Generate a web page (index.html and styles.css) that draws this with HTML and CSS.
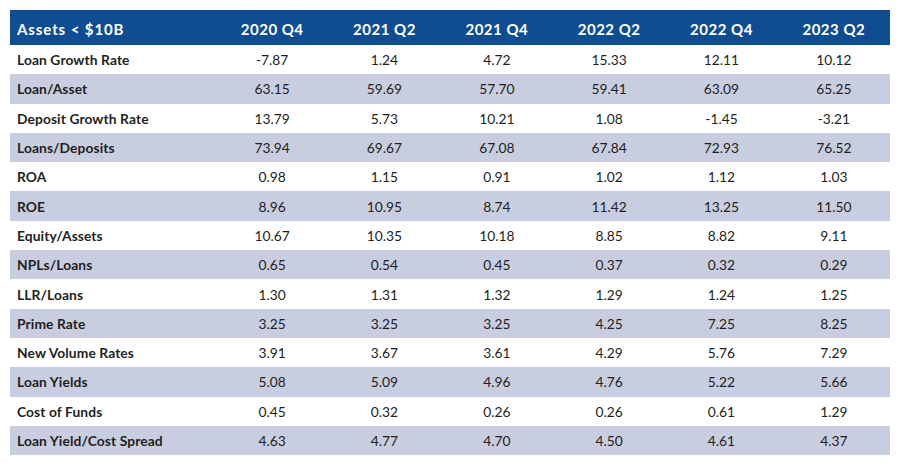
FILE: index.html
```html
<!DOCTYPE html>
<html>
<head>
<meta charset="utf-8">
<link rel="stylesheet" href="styles.css">
</head>
<body>
<table class="data">
<colgroup><col class="c-label"><col><col><col><col><col><col></colgroup>
<thead>
<tr><th class="label">Assets &lt; $10B</th><th>2020 Q4</th><th>2021 Q2</th><th>2021 Q4</th><th>2022 Q2</th><th>2022 Q4</th><th>2023 Q2</th></tr>
</thead>
<tbody>
<tr><td class="label">Loan Growth Rate</td><td>-7.87</td><td>1.24</td><td>4.72</td><td>15.33</td><td>12.11</td><td>10.12</td></tr>
<tr><td class="label">Loan/Asset</td><td>63.15</td><td>59.69</td><td>57.70</td><td>59.41</td><td>63.09</td><td>65.25</td></tr>
<tr><td class="label">Deposit Growth Rate</td><td>13.79</td><td>5.73</td><td>10.21</td><td>1.08</td><td>-1.45</td><td>-3.21</td></tr>
<tr><td class="label">Loans/Deposits</td><td>73.94</td><td>69.67</td><td>67.08</td><td>67.84</td><td>72.93</td><td>76.52</td></tr>
<tr><td class="label">ROA</td><td>0.98</td><td>1.15</td><td>0.91</td><td>1.02</td><td>1.12</td><td>1.03</td></tr>
<tr><td class="label">ROE</td><td>8.96</td><td>10.95</td><td>8.74</td><td>11.42</td><td>13.25</td><td>11.50</td></tr>
<tr><td class="label">Equity/Assets</td><td>10.67</td><td>10.35</td><td>10.18</td><td>8.85</td><td>8.82</td><td>9.11</td></tr>
<tr><td class="label">NPLs/Loans</td><td>0.65</td><td>0.54</td><td>0.45</td><td>0.37</td><td>0.32</td><td>0.29</td></tr>
<tr><td class="label">LLR/Loans</td><td>1.30</td><td>1.31</td><td>1.32</td><td>1.29</td><td>1.24</td><td>1.25</td></tr>
<tr><td class="label">Prime Rate</td><td>3.25</td><td>3.25</td><td>3.25</td><td>4.25</td><td>7.25</td><td>8.25</td></tr>
<tr><td class="label">New Volume Rates</td><td>3.91</td><td>3.67</td><td>3.61</td><td>4.29</td><td>5.76</td><td>7.29</td></tr>
<tr><td class="label">Loan Yields</td><td>5.08</td><td>5.09</td><td>4.96</td><td>4.76</td><td>5.22</td><td>5.66</td></tr>
<tr><td class="label">Cost of Funds</td><td>0.45</td><td>0.32</td><td>0.26</td><td>0.26</td><td>0.61</td><td>1.29</td></tr>
<tr><td class="label">Loan Yield/Cost Spread</td><td>4.63</td><td>4.77</td><td>4.70</td><td>4.50</td><td>4.61</td><td>4.37</td></tr>
</tbody>
</table>
</body>
</html>
```
FILE: styles.css
```css
html, body { margin: 0; padding: 0; background: #ffffff; }
body { padding: 10px 10px 0 10px; font-family: "Lato", "Open Sans", sans-serif; color: #231f20; }
.data { width: 880px; border-collapse: collapse; table-layout: fixed; }
.c-label { width: 206px; }
.data th { height: 33px; padding: 2px 0 0 0; background: #0f4d93; color: #ffffff; font-weight: 700; font-size: 15px; text-align: center; letter-spacing: 0.5px; }
.data th.label { text-align: left; padding-left: 7px; letter-spacing: 0.9px; }
.data td { height: 29.3px; padding: 0; font-size: 13.8px; text-align: center; }
.data td.label { text-align: left; padding-left: 7px; font-weight: 700; letter-spacing: 0.1px; }
.data tbody tr:nth-child(even) td { background: #c9cde0; }
```
